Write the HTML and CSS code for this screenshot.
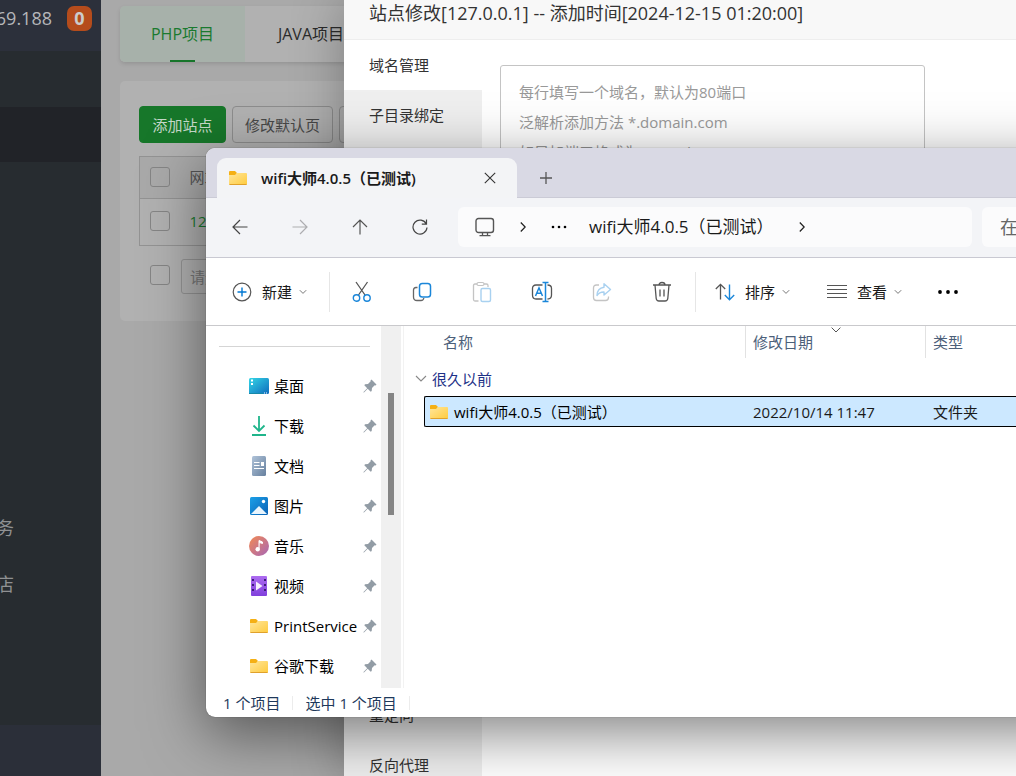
FILE: index.html
```html
<!DOCTYPE html>
<html lang="zh-CN">
<head>
<meta charset="utf-8">
<title>站点管理</title>
<link rel="stylesheet" href="styles.css">
</head>
<body>
<svg class="defs" width="0" height="0" aria-hidden="true">
  <defs>
    <linearGradient id="g-folder" x1="0" y1="0" x2="1" y2="1"><stop offset="0" stop-color="#ffe69b"/><stop offset="1" stop-color="#ffcb3d"/></linearGradient>
    <linearGradient id="g-desk" x1="0" y1="0" x2="1" y2="1"><stop offset="0" stop-color="#34d6e6"/><stop offset="1" stop-color="#0f6cbd"/></linearGradient>
    <linearGradient id="g-doc" x1="0" y1="0" x2="1" y2="1"><stop offset="0" stop-color="#b0c3d9"/><stop offset="1" stop-color="#66809e"/></linearGradient>
    <linearGradient id="g-pic" x1="0" y1="0" x2="1" y2="1"><stop offset="0" stop-color="#1ba0e8"/><stop offset="1" stop-color="#0b62b5"/></linearGradient>
    <linearGradient id="g-music" x1="0" y1="0" x2="1" y2="1"><stop offset="0" stop-color="#f38a52"/><stop offset="1" stop-color="#a766b6"/></linearGradient>
    <linearGradient id="g-video" x1="0" y1="0" x2="0" y2="1"><stop offset="0" stop-color="#ad6cf0"/><stop offset="1" stop-color="#8040dc"/></linearGradient>
    <symbol id="folder" viewBox="0 0 20 20"><path d="M1 4q0-1 1-1h5l2 2-2 3H1z" fill="#f5b014"/><path d="M1 7h6l2-2h9q1 0 1 1v10q0 1-1 1H2q-1 0-1-1z" fill="url(#g-folder)"/><path d="M1.500 16.500h17" stroke="#e0a12b"/></symbol>
    <symbol id="pin" viewBox="0 0 14 14"><path d="M8.500 .5 13.500 5.500 12.600 6.500 11.700 6.300 9 9 8.700 12 7.700 12.700 4.700 9.700 1 13.500 .5 13.500 .5 13 4.200 9.300 1.300 6.300 2 5.300 5 5 7.700 2.300 7.500 1.400z" fill="#929ca5"/></symbol>
    <symbol id="chev" viewBox="0 0 8 6"><path d="M.8 1.200 4 4.400 7.200 1.200" fill="none" stroke="currentColor"/></symbol>
  </defs>
</svg>

<div class="app">
  <aside class="side">
    <header class="side-head"><span>69.188</span><b class="badge">0</b></header>
    <nav class="side-nav">
      <div class="side-gap"></div>
      <div class="side-active"></div>
      <div class="side-fill"></div>
      <a class="side-link" href="#">务</a>
      <a class="side-link" href="#">店</a>
    </nav>
    <footer class="side-foot"></footer>
  </aside>

  <main class="content">
    <nav class="tabs">
      <button class="tab tab-on">PHP项目</button>
      <button class="tab">JAVA项目</button>
    </nav>
    <section class="panel">
      <div class="actions">
        <button class="btn btn-main">添加站点</button>
        <button class="btn">修改默认页</button>
        <button class="btn" aria-label="默认站点"></button>
      </div>
      <table class="sites">
        <tr><th class="pick"><input type="checkbox" class="box" aria-label="全选"></th><th>网站名</th></tr>
        <tr><td class="pick"><input type="checkbox" class="box" aria-label="选择站点"></td><td><a class="site" href="#">127.0.0.1</a></td></tr>
      </table>
      <div class="batch">
        <input type="checkbox" class="box" aria-label="批量选择">
        <select class="batch-select" aria-label="批量操作"><option>请选择批量操作</option></select>
      </div>
    </section>
  </main>
</div>

<section class="modal">
  <h2 class="modal-title">站点修改[127.0.0.1] -- 添加时间[2024-12-15 01:20:00]</h2>
  <div class="modal-body">
    <ul class="menu">
      <li class="menu-on">域名管理</li>
      <li>子目录绑定</li>
      <li class="menu-gap"></li>
      <li>重定向</li>
      <li>反向代理</li>
    </ul>
    <div class="modal-form">
      <textarea class="domains" aria-label="域名" placeholder="每行填写一个域名，默认为80端口&#10;泛解析添加方法 *.domain.com&#10;如另加端口格式为 www.domain.com:88"></textarea>
    </div>
  </div>
</section>

<section class="explorer">
  <header class="strip">
    <div class="wtab">
      <svg class="i20"><use href="#folder"/></svg>
      <span class="wtab-name">wifi大师4.0.5（已测试)</span>
      <button class="icon" aria-label="关闭"><svg width="12" height="12" viewBox="0 0 12 12"><path d="M.8.8 11.200 11.200M11.200.8.8 11.200" stroke="#333" stroke-width="1.100"/></svg></button>
    </div>
    <button class="icon add" aria-label="新标签页"><svg width="12" height="12" viewBox="0 0 12 12"><path d="M6 0V12M0 6H12" stroke="#555" stroke-width="1.300"/></svg></button>
  </header>

  <div class="navbar">
    <div class="navbtns">
      <button class="icon" aria-label="后退"><svg width="16" height="16" viewBox="0 0 16 16"><path d="M8 1 1 8 8 15M1 8H15.500" fill="none" stroke="#444" stroke-width="1.200"/></svg></button>
      <button class="icon" aria-label="前进"><svg width="16" height="16" viewBox="0 0 16 16"><path d="M8 1 15 8 8 15M15 8H.5" fill="none" stroke="#adadb0" stroke-width="1.200"/></svg></button>
      <button class="icon" aria-label="向上"><svg width="16" height="16" viewBox="0 0 16 16"><path d="M1 8 8 1 15 8M8 1V15.500" fill="none" stroke="#555" stroke-width="1.200"/></svg></button>
      <button class="icon" aria-label="刷新"><svg width="16" height="16" viewBox="0 0 16 16"><path d="M14.300 5A7 7 0 1 0 15 8.500M14.500 .5V5.200H9.800" fill="none" stroke="#444" stroke-width="1.200"/></svg></button>
    </div>
    <div class="address">
      <svg class="pc" width="20" height="20" viewBox="0 0 20 20"><rect x="1" y="1.500" width="17.500" height="14" rx="2.500" fill="none" stroke="#555" stroke-width="1.400"/><path d="M7.500 15.500V18.500M12.500 15.500V18.500M4.500 18.700H15.500" stroke="#555" stroke-width="1.300"/></svg>
      <svg class="sep" width="6" height="10" viewBox="0 0 6 10"><path d="M.8.5 5.200 5 .8 9.500" fill="none" stroke="#222" stroke-width="1.300"/></svg>
      <svg class="dots" width="16" height="4" viewBox="0 0 16 4"><circle cx="2" cy="2" r="1.300"/><circle cx="8" cy="2" r="1.300"/><circle cx="14" cy="2" r="1.300"/></svg>
      <span class="path">wifi大师4.0.5（已测试）</span>
      <svg class="sep" width="6" height="10" viewBox="0 0 6 10"><path d="M.8.5 5.200 5 .8 9.500" fill="none" stroke="#222" stroke-width="1.300"/></svg>
    </div>
    <input class="search" type="text" aria-label="搜索" placeholder="在 wifi大师">
  </div>

  <div class="toolbar">
    <button class="tool new"><svg width="20" height="20" viewBox="0 0 20 20"><circle cx="10" cy="10" r="8.800" fill="none" stroke="#555" stroke-width="1.200"/><path d="M10 5.500V14.500M5.500 10H14.500" stroke="#0078d4" stroke-width="1.400"/></svg><span>新建</span><svg class="chev"><use href="#chev"/></svg></button>
    <i class="rule"></i>
    <div class="tools">
      <button class="icon" aria-label="剪切"><svg width="20" height="22" viewBox="0 0 20 22"><path d="M4 1 13 14M15.500 1 6.500 14" stroke="#555" stroke-width="1.300"/><circle cx="4.500" cy="17" r="3.200" fill="none" stroke="#1a86d9" stroke-width="1.400"/><circle cx="15" cy="17" r="3.200" fill="none" stroke="#1a86d9" stroke-width="1.400"/></svg></button>
      <button class="icon" aria-label="复制"><svg width="20" height="20" viewBox="0 0 20 20"><path d="M5.500 5.500H4Q1.500 5.500 1.500 8V15Q1.500 18.500 5 18.500H9Q11.500 18.500 11.800 16" fill="none" stroke="#666" stroke-width="1.300"/><rect x="7.500" y="1.500" width="11" height="13.500" rx="2.800" fill="none" stroke="#1a86d9" stroke-width="1.500"/></svg></button>
      <button class="icon" aria-label="粘贴"><svg width="20" height="22" viewBox="0 0 20 22"><path d="M5 3H3Q1.500 3 1.500 4.500V18.500Q1.500 20 3 20H6.500M12 3H14.500Q16 3 16 4.500V6" fill="none" stroke="#c4c4c4" stroke-width="1.300"/><rect x="5" y="1.500" width="7" height="3" rx="1.500" fill="none" stroke="#c4c4c4" stroke-width="1.200"/><rect x="9" y="7.500" width="9.500" height="13" rx="1.500" fill="none" stroke="#a9d1f0" stroke-width="1.400"/></svg></button>
      <button class="icon" aria-label="重命名"><svg width="22" height="22" viewBox="0 0 22 22"><path d="M11.500 4H5Q1.500 4 1.500 7.500V14Q1.500 18 5 18H11.500M16.500 4Q20.500 4 20.500 7.500V14Q20.500 18 16.500 18" fill="none" stroke="#555" stroke-width="1.300"/><path d="M4.500 15 8 6.800 11.500 15M5.700 12.300H10.300M14.500 1.500V20.500M11.500 1.500H17.500M11.500 20.500H17.500" fill="none" stroke="#1a86d9" stroke-width="1.500"/></svg></button>
      <button class="icon" aria-label="共享"><svg width="20" height="20" viewBox="0 0 20 20"><path d="M7 3H4.500Q1.500 3 1.500 6V15.500Q1.500 18.500 4.500 18.500H13.500Q16.500 18.500 16.500 15.500V14.500" fill="none" stroke="#c4c4c4" stroke-width="1.300"/><path d="M12 1.800 18.500 7.500 12 13V10Q7.500 9.800 5 13.500 5.200 6 12 5.200Z" fill="none" stroke="#a9d1f0" stroke-width="1.400" stroke-linejoin="round"/></svg></button>
      <button class="icon" aria-label="删除"><svg width="20" height="22" viewBox="0 0 20 22"><path d="M1 4H19M3 4 4.200 17.500Q4.500 20 7 20H13Q15.500 20 15.800 17.500L17 4M7 4Q7 1.500 10 1.500T13 4M8 8.500V15.500M12 8.500V15.500" fill="none" stroke="#555" stroke-width="1.300"/></svg></button>
    </div>
    <i class="rule"></i>
    <button class="tool sort"><svg width="20" height="18" viewBox="0 0 20 18"><path d="M.8 6 5.500 1.300 10.200 6M5.500 1.300V16.500" fill="none" stroke="#555" stroke-width="1.300"/><path d="M9.800 12 14.500 16.700 19.200 12M14.500 16.700V1.500" fill="none" stroke="#1a86d9" stroke-width="1.400"/></svg><span>排序</span><svg class="chev"><use href="#chev"/></svg></button>
    <button class="tool view"><svg width="20" height="14" viewBox="0 0 20 14"><path d="M0 .5H20M0 4.500H20M0 8.500H20M0 12.500H20" stroke="#555"/></svg><span>查看</span><svg class="chev"><use href="#chev"/></svg></button>
    <button class="icon more" aria-label="更多"><svg width="20" height="4" viewBox="0 0 20 4"><circle cx="2" cy="2" r="1.900"/><circle cx="10" cy="2" r="1.900"/><circle cx="18" cy="2" r="1.900"/></svg></button>
  </div>

  <div class="body">
    <nav class="tree">
      <hr class="tree-rule">
      <a class="node" href="#"><svg class="i20" viewBox="0 0 20 20"><rect y="2" width="20" height="16" rx="1.500" fill="url(#g-desk)"/><path d="M2 4.500H4M2 8H4" stroke="#fff" stroke-width="2"/><path d="M0 17.500H14" stroke="#1689a8"/><path d="M15 17H16M17 17H18" stroke="#fff"/></svg><span>桌面</span><svg class="pin"><use href="#pin"/></svg></a>
      <a class="node" href="#"><svg class="i20" viewBox="0 0 20 20"><path d="M10 0V15M4.500 9.500 10 15 15.500 9.500M3 19H17" fill="none" stroke="#1fb58b" stroke-width="1.800"/></svg><span>下载</span><svg class="pin"><use href="#pin"/></svg></a>
      <a class="node" href="#"><svg class="i20" viewBox="0 0 20 20"><rect x="3" width="14" height="20" rx="1.500" fill="url(#g-doc)"/><path d="M5 6.500H10.500M5 9.500H10.500M5 12.500H15" stroke="#fff" stroke-width="1.200"/><rect x="12" y="6" width="3" height="4" fill="#fff"/></svg><span>文档</span><svg class="pin"><use href="#pin"/></svg></a>
      <a class="node" href="#"><svg class="i20" viewBox="0 0 20 20"><rect x="1" y="1" width="18" height="18" rx="1.500" fill="url(#g-pic)"/><path d="M2 18 10 10 18 18Z" fill="#eaf5fd"/><circle cx="14.500" cy="5.500" r="1.700" fill="#fff"/></svg><span>图片</span><svg class="pin"><use href="#pin"/></svg></a>
      <a class="node" href="#"><svg class="i20" viewBox="0 0 20 20"><circle cx="10" cy="10" r="10" fill="url(#g-music)"/><path d="M10 13V4.500L13.500 6V7.500L10.500 6.500" fill="#fff" stroke="#fff"/><circle cx="8.700" cy="13.300" r="2.200" fill="#fff"/></svg><span>音乐</span><svg class="pin"><use href="#pin"/></svg></a>
      <a class="node" href="#"><svg class="i20" viewBox="0 0 20 20"><rect x="2" width="16" height="20" rx="1" fill="url(#g-video)"/><path d="M4 3V18M16 3V18" stroke="#3d1d78" stroke-width="2" stroke-dasharray="2 3"/><path d="M7 5.500 13.500 10 7 14.500Z" fill="#f5effd"/></svg><span>视频</span><svg class="pin"><use href="#pin"/></svg></a>
      <a class="node" href="#"><svg class="i20"><use href="#folder"/></svg><span>PrintService</span><svg class="pin"><use href="#pin"/></svg></a>
      <a class="node" href="#"><svg class="i20"><use href="#folder"/></svg><span>谷歌下载</span><svg class="pin"><use href="#pin"/></svg></a>
    </nav>
    <div class="scroll"><div class="thumb"></div></div>
    <div class="list">
      <table class="files">
        <colgroup><col class="c-pad"><col class="c-name"><col class="c-date"><col></colgroup>
        <thead><tr><th></th><th class="h-name">名称</th><th class="h-date">修改日期<svg class="sortmark" viewBox="0 0 10 6"><path d="M.6.6 5 5 9.400.6" fill="none" stroke="#555"/></svg></th><th>类型</th></tr></thead>
        <tbody>
          <tr class="group"><td colspan="4"><div class="group-in"><svg width="12" height="7" viewBox="0 0 12 7"><path d="M1 1 6 6 11 1" fill="none" stroke="#888" stroke-width="1.100"/></svg><span>很久以前</span></div></td></tr>
          <tr class="file"><td></td><td class="f-name"><div class="fname"><svg class="i20"><use href="#folder"/></svg><span>wifi大师4.0.5（已测试）</span></div></td><td>2022/10/14 11:47</td><td>文件夹</td></tr>
        </tbody>
      </table>
    </div>
  </div>

  <footer class="status"><span>1 个项目</span><i></i><span>选中 1 个项目</span><i></i></footer>
</section>
</body>
</html>
```

FILE: styles.css
```css
* { box-sizing: border-box; }
body {
  margin: 0;
  min-height: 100vh;
  position: relative;
  overflow: hidden;
  font: 15px/20px "Open Sans", "Noto Sans CJK SC", sans-serif;
  color: #1a1a1a;
}
button, input, select, textarea { font: inherit; color: inherit; }
button { border: 0; background: none; padding: 0; }
a { color: inherit; text-decoration: none; }
svg { display: block; flex: none; }
.defs { position: absolute; }
.i20 { width: 20px; height: 20px; }
.icon { display: grid; place-items: center; width: 60px; height: 40px; flex: none; }

/* Site manager behind the windows */
.app { display: flex; height: 100vh; background: #a9a9a9; }
.side { display: flex; flex-direction: column; width: 101px; flex: none; background: #272c30; overflow: hidden; }
.side-head {
  display: flex; justify-content: flex-end; align-items: center; gap: 15px;
  height: 51px; padding: 0 9px 15px 0; background: #2c303b;
  color: #b5b6b9; font-size: 18px; flex: none;
}
.badge { flex: none; width: 25px; height: 25px; border-radius: 7px; background: #b54c1c; color: #ccc; font-size: 18px; line-height: 25px; text-align: center; }
.side-nav { display: flex; flex-direction: column; flex: 1; }
.side-gap { height: 56px; }
.side-active { height: 55px; background: #212328; }
.side-fill { height: 338px; }
.side-link { display: flex; justify-content: flex-end; align-items: center; height: 56px; padding-right: 87px; color: #8f9193; font-size: 18px; }
.side-foot { height: 51px; background: #2b2f39; flex: none; }

.content { flex: 1; padding: 6px 0 0 19px; display: flex; flex-direction: column; gap: 19px; min-width: 0; }
.tabs { display: flex; height: 56px; background: #b1b1b1; border-radius: 5px; box-shadow: 0 2px 4px rgba(0, 0, 0, .12); }
.tab { position: relative; width: 125px; padding: 0; white-space: nowrap; color: #2b2b2b; font-size: 16px; }
.tab + .tab { width: 132px; }
.tab-on { background: #a7b1aa; color: #1a7a2f; border-radius: 5px 0 0 5px; }
.tab-on::after { content: ""; position: absolute; left: 50px; bottom: 0; width: 25px; height: 2px; background: #17752a; }
.panel { background: #b1b1b1; border-radius: 5px; height: 240px; padding: 25px 19px; }
.actions { display: flex; gap: 6px; margin-bottom: 13px; }
.btn { height: 37px; min-width: 87px; padding: 0 12px; border: 1px solid #8d8d8d; border-radius: 4px; color: #484848; }
.btn-main { background: #17772a; border-color: #17772a; color: #c5d8c9; }
.sites { width: 100%; border-collapse: collapse; border: 1px solid #939393; }
.sites th, .sites td { height: 47px; padding: 0; text-align: left; font-weight: 400; color: #555; }
.sites th { height: 42px; padding-bottom: 2px; background: #a9a9a9; border-bottom: 1px solid #939393; }
.sites td { padding-bottom: 2px; }
.sites .pick { width: 50px; padding-left: 10px; }
.site { color: #1a7a2f; }
.box { appearance: none; display: block; width: 20px; height: 20px; margin: 0; border: 1px solid #858585; border-radius: 3px; }
.batch { display: flex; align-items: flex-start; gap: 11px; padding: 13px 0 0 11px; }
.batch .box { margin-top: 6px; }
.batch-select { appearance: none; width: 180px; height: 35px; padding: 0 8px; border: 1px solid #939393; border-radius: 3px; background: none; color: #777; }

/* Site settings dialog */
.modal {
  position: absolute; left: 344px; right: 0; top: 0; bottom: 0;
  display: flex; flex-direction: column; background: #fff;
  box-shadow: 1px 1px 50px rgba(0, 0, 0, .3);
}
.modal-title { margin: 0; height: 40px; padding: 1px 25px 0; line-height: 24px; font-size: 18px; font-weight: 400; color: #333; background: #f8f8f8; border-bottom: 1px solid #eee; }
.modal-body { display: flex; flex: 1; min-height: 0; }
.menu { margin: 0; padding: 0; list-style: none; width: 138px; background: #efefef; color: #333; overflow: hidden; }
.menu li { height: 50px; line-height: 50px; padding-left: 25px; }
.menu .menu-on { background: #fff; }
.menu .menu-gap { height: 550px; }
.modal-form { flex: 1; padding: 25px 91px 0 18px; }
.domains { display: block; width: 100%; height: 180px; padding: 11px 18px; line-height: 30px; border: 1px solid #c4c4c4; border-radius: 3px; resize: none; }
.domains::placeholder { color: #999; }

/* File manager window */
.explorer {
  position: absolute; left: 206px; right: -100px; top: 148px;
  background: #fff; border-radius: 9px; overflow: hidden;
  box-shadow: 0 0 1px rgba(0, 0, 0, .6), 0 16px 60px rgba(0, 0, 0, .5);
}
.strip { display: flex; align-items: flex-end; height: 50px; padding-left: 11px; background: #d9d9e4; box-shadow: inset 0 -1px #cbcbd6; }
.wtab { display: flex; align-items: center; width: 300px; height: 40px; padding-left: 11px; background: #f3f4f6; border-radius: 9px 9px 0 0; }
.wtab-name { flex: 1; margin-left: 13px; font-weight: 600; white-space: nowrap; }
.wtab .icon { width: 54px; }
.add { width: 58px; }
.navbar { display: flex; align-items: center; height: 60px; padding: 0 0 2px 4px; background: #f3f4f7; border-bottom: 1px solid #c9c9d2; }
.navbtns { display: flex; width: 248px; flex: none; }
.address { display: flex; align-items: center; flex: 1; height: 40px; padding-left: 17px; background: #fbfbfc; border-radius: 6px; font-size: 17px; }
.address .sep { margin-left: 25px; }
.address .dots { margin-left: 25px; }
.address .path { margin-left: 22px; white-space: nowrap; }
.search { width: 134px; height: 40px; margin-left: 10px; padding: 0 0 0 18px; border: 0; border-radius: 6px; background: #fbfbfc; font-size: 18px; }
.search::placeholder { color: #666; }
.toolbar { display: flex; align-items: center; height: 68px; border-bottom: 1px solid #c9c9cc; }
.tool { display: flex; align-items: center; height: 40px; flex: none; }
.chev { width: 8px; height: 6px; color: #777; margin-left: 7px; }
.new { padding: 0 22px 0 26px; }
.tool span { margin-left: 10px; }
.rule { width: 1px; height: 40px; background: #e6e6e6; flex: none; }
.tools { display: flex; padding: 0 3px 0 2px; }
.sort { padding-left: 19px; }
.view { padding-left: 37px; }
.more { margin-left: 16px; }
.body { display: flex; }
.tree { width: 175px; padding: 20px 0 2px; flex: none; }
.tree-rule { margin: 0 11px 19px 13px; border: 0; border-top: 1px solid #d5d5d5; }
.node { display: flex; align-items: center; height: 40px; padding: 0 4px 0 43px; color: #000; }
.node span { flex: 1; min-width: 0; margin-left: 5px; white-space: nowrap; }
.pin { width: 14px; height: 14px; }
.scroll { width: 20px; flex: none; background: #f0f0f0; padding: 67px 7px 0; }
.thumb { height: 122px; background: #858585; }
.list { flex: 1; margin-left: 2px; border-left: 1px solid #f2f2f2; min-width: 0; }
.files { width: 100%; table-layout: fixed; border-collapse: separate; border-spacing: 0; }
.c-pad { width: 20px; }
.c-name { width: 321px; }
.c-date { width: 180px; }
.files th { position: relative; height: 32px; padding: 0 7px; text-align: left; font-weight: 400; color: #4c607a; border-left: 1px solid #e2e2e2; }
.files th:first-child, .files .h-name { border-left: 0; }
.files .h-name { padding-left: 19px; }
.sortmark { position: absolute; top: 1px; left: 50%; width: 10px; height: 6px; margin-left: -5px; }
.group td { height: 38px; padding: 3px 0 0 11px; color: #1e3287; }
.group-in { display: flex; align-items: center; gap: 5px; }
.file td { height: 31px; padding: 0 8px; color: #1a1a1a; background: #cce8ff; border: solid #000; border-width: 1px 0; }
.file td:first-child { background: none; border: 0; }
.file .f-name { padding: 0 0 0 4px; border-left-width: 1px; border-radius: 2px 0 0 2px; color: #000; }
.fname { display: flex; align-items: center; gap: 5px; }
.status { display: flex; align-items: center; height: 29px; padding-left: 17px; color: #1e395b; }
.status i { width: 1px; height: 14px; margin: 0 12px; background: #ececec; }
```
